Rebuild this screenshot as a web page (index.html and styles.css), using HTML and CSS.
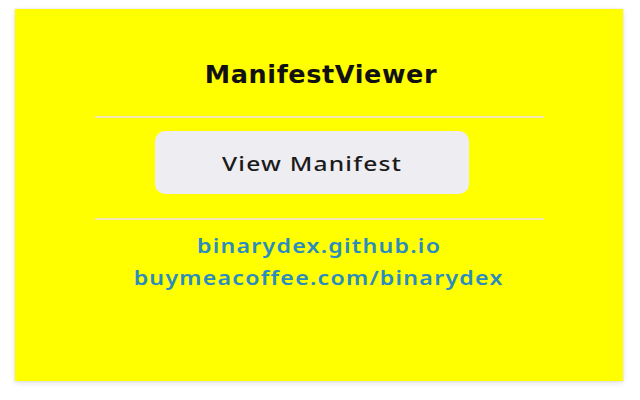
FILE: index.html
```html
<!DOCTYPE html>
<html lang="en">
<head>
<meta charset="utf-8">
<title>ManifestViewer</title>
<link rel="stylesheet" href="styles.css">
</head>
<body>
<main class="card">
  <h1 class="title">ManifestViewer</h1>
  <hr class="divider">
  <button class="view-btn" type="button"><span class="btn-label">View Manifest</span></button>
  <hr class="divider divider-lower">
  <nav class="links">
    <a class="link" href="#">binarydex.github.io</a>
    <a class="link" href="#">buymeacoffee.com/binarydex</a>
  </nav>
</main>
</body>
</html>
```

FILE: styles.css
```css
html, body {
  margin: 0;
  padding: 0;
  background: #ffffff;
}

body {
  width: 640px;
  height: 400px;
  overflow: hidden;
  font-family: "Noto Sans", "DejaVu Sans", sans-serif;
}

.card {
  box-sizing: border-box;
  width: 608px;
  height: 372px;
  margin: 9px 0 0 15px;
  background: #ffff00;
  box-shadow: 0 2px 6px rgba(0, 0, 0, 0.12), 0 0 0 1px rgba(0, 0, 0, 0.03);
  display: flex;
  flex-direction: column;
  align-items: center;
  padding-top: 50px;
}

.title {
  margin: 0 0 0 4px;
  font-family: "DejaVu Sans", sans-serif;
  font-size: 25.5px;
  line-height: 30px;
  font-weight: 700;
  letter-spacing: 0.6px;
  color: #111111;
}

.divider {
  width: 449px;
  height: 2px;
  border: 0;
  margin: 27px 0 0;
  background: #f3e9b4;
}

.divider-lower {
  margin-top: 24px;
}

.view-btn {
  box-sizing: border-box;
  width: 314px;
  height: 63px;
  margin: 13px 14px 0 0;
  padding: 0;
  border: 0;
  border-radius: 10px;
  background: #eeedf1;
  font-family: inherit;
  font-size: 20.5px;
  font-weight: 500;
  letter-spacing: 1px;
  color: #1b1b1b;
}

.btn-label {
  display: inline-block;
  transform: scaleX(1.2);
}

.links {
  margin-top: 10px;
  display: flex;
  flex-direction: column;
  align-items: center;
}

.link {
  display: inline-block;
  font-size: 19px;
  line-height: 32px;
  font-weight: 600;
  letter-spacing: 1px;
  color: #2a8cbf;
  text-decoration: none;
  transform: scaleX(1.22);
}
```
